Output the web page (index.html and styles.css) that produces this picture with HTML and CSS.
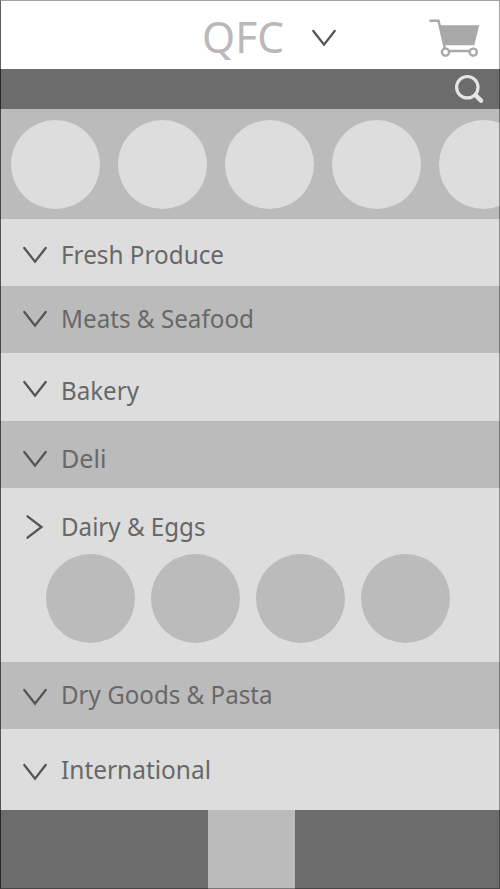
FILE: index.html
```
<!DOCTYPE html>
<html lang="en">
<head>
<meta charset="utf-8">
<title>QFC</title>
<link rel="stylesheet" href="styles.css">
</head>
<body>
<div class="screen">
  <header class="header">
    <svg class="brand" width="92" height="66"><text x="0" y="50" textLength="82" lengthAdjust="spacingAndGlyphs">QFC</text></svg>
    <svg class="chevron brand-chevron" width="26" height="18"><path d="M2.3 2 13 15.7 23.7 2"/></svg>
    <svg class="cart" width="52" height="42" viewBox="0 0 52 42">
      <path class="basket" d="M10.5 8.3H50.2L45.3 28.3H15Z"/>
      <path class="line" d="M.5 3.8H9.5L16 32M20 34H41"/>
      <circle cx="16.5" cy="35.2" r="3.6"/><circle cx="44.3" cy="35.2" r="3.6"/>
    </svg>
  </header>
  <div class="search">
    <svg width="32" height="32"><circle cx="13.3" cy="14.2" r="10.7"/><path d="M21.5 22.2 27 27.7"/></svg>
  </div>
  <div class="strip"><i></i><i></i><i></i><i></i><i></i></div>
  <main>
    <section class="row produce">
      <svg class="chevron" width="26" height="18"><path d="M2.3 2 13 15.7 23.7 2"/></svg>
      <svg class="label" width="240" height="44"><text x="0" y="30" textLength="163" lengthAdjust="spacingAndGlyphs">Fresh Produce</text></svg>
    </section>
    <section class="row meats dark">
      <svg class="chevron" width="26" height="18"><path d="M2.3 2 13 15.7 23.7 2"/></svg>
      <svg class="label" width="240" height="44"><text x="0" y="30" textLength="193" lengthAdjust="spacingAndGlyphs">Meats &amp; Seafood</text></svg>
    </section>
    <section class="row bakery">
      <svg class="chevron" width="26" height="18"><path d="M2.3 2 13 15.7 23.7 2"/></svg>
      <svg class="label" width="240" height="44"><text x="0" y="30" textLength="78" lengthAdjust="spacingAndGlyphs">Bakery</text></svg>
    </section>
    <section class="row deli dark">
      <svg class="chevron" width="26" height="18"><path d="M2.3 2 13 15.7 23.7 2"/></svg>
      <svg class="label" width="240" height="44"><text x="0" y="30" textLength="45.5" lengthAdjust="spacingAndGlyphs">Deli</text></svg>
    </section>
    <section class="dairy">
      <div class="row">
        <svg class="chevron" width="26" height="26"><path d="M5.5 2.3 19.5 13 5.5 23.7"/></svg>
        <svg class="label" width="240" height="44"><text x="0" y="30" textLength="144.5" lengthAdjust="spacingAndGlyphs">Dairy &amp; Eggs</text></svg>
      </div>
      <div class="items"><i></i><i></i><i></i><i></i></div>
    </section>
    <section class="row pasta dark">
      <svg class="chevron" width="26" height="18"><path d="M2.3 2 13 15.7 23.7 2"/></svg>
      <svg class="label" width="240" height="44"><text x="0" y="30" textLength="211.5" lengthAdjust="spacingAndGlyphs">Dry Goods &amp; Pasta</text></svg>
    </section>
    <section class="row international">
      <svg class="chevron" width="26" height="18"><path d="M2.3 2 13 15.7 23.7 2"/></svg>
      <svg class="label" width="240" height="44"><text x="0" y="30" textLength="150" lengthAdjust="spacingAndGlyphs">International</text></svg>
    </section>
  </main>
  <footer class="footer"><div class="tab"></div></footer>
</div>
</body>
</html>
```
FILE: styles.css
```
* { box-sizing: border-box; }
body { margin: 0; background: #ddd; }
svg { display: block; flex: none; fill: none; overflow: visible; }
i { display: block; flex: none; width: 89px; height: 89px; border-radius: 50%; }

.screen {
  position: relative;
  width: 500px;
  height: 889px;
  overflow: hidden;
  background: #ddd;
  font-family: "Noto Sans", "Open Sans", sans-serif;
}
/* thin outline of the device frame, over the bars */
.screen::after {
  content: "";
  position: absolute;
  inset: 0;
  border: 1px solid rgba(0, 0, 0, .36);
  border-left-color: rgba(0, 0, 0, .62);
  pointer-events: none;
}

.header {
  display: flex;
  align-items: flex-start;
  height: 69px;
  background: #fff;
}
.brand { margin: 3px 0 0 202px; }
.brand text { font-size: 43px; fill: #b9b9b9; }
.chevron { stroke: #555; stroke-width: 2.3; stroke-linecap: round; stroke-linejoin: miter; }
.brand-chevron { margin: 29px 0 0 17px; }
.cart { margin: 17px 0 0 92px; stroke: #a9a9a9; stroke-width: 2.4; }
.cart .basket { fill: #a9a9a9; stroke: none; }

.search {
  display: flex;
  justify-content: flex-end;
  height: 40px;
  padding: 4px 14px 0 0;
  background: #6c6c6c;
}
.search svg { stroke: #e5e5e5; stroke-width: 3.2; }
.search path { stroke-width: 4.5; stroke-linecap: round; }

.strip {
  display: flex;
  gap: 18px;
  height: 110px;
  padding: 11px 0 0 11px;
  overflow: hidden;
  background: #bbb;
}
.strip i { background: #ddd; }

.row { display: flex; align-items: flex-start; padding-left: 22px; }
.dark { background: #bbb; }
.label { margin-left: 12.5px; }
.label text { font-size: 26px; fill: #686868; }

.produce { height: 67px; }
.produce .chevron { margin-top: 27px; }
.produce .label { margin-top: 14.5px; }
.meats { height: 67px; }
.meats .chevron { margin-top: 24px; }
.meats .label { margin-top: 11.5px; }
.bakery { height: 68px; }
.bakery .chevron { margin-top: 27px; }
.bakery .label { margin-top: 17px; }
.deli { height: 67px; }
.deli .chevron { margin-top: 29px; }
.deli .label { margin-top: 16.5px; }
.dairy { height: 174px; }
.dairy .row { height: 66px; }
.dairy .chevron { margin-top: 26px; }
.dairy .label { margin-top: 17.5px; }
.items { display: flex; gap: 16.3px; padding-left: 45.5px; }
.items i { background: #bbb; }
.pasta { height: 67px; }
.pasta .chevron { margin-top: 26px; }
.pasta .label { margin-top: 11.5px; }
.international { height: 81px; }
.international .chevron { margin-top: 34px; }
.international .label { margin-top: 19.5px; }

.footer { display: flex; height: 79px; padding-left: 208px; background: #6c6c6c; }
.tab { width: 87px; background: #bbb; }
```
